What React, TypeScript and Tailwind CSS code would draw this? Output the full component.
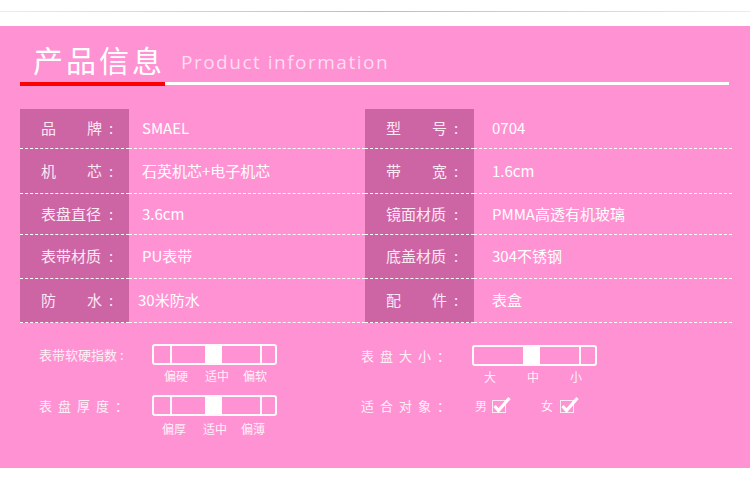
const cjk = "font-['Noto_Sans_CJK_SC','Noto_Sans',sans-serif]";

const rows = [
  { h: "h-[40px]", l1: ["品", "牌"], v1: "SMAEL", l2: ["型", "号"], v2: "0704" },
  { h: "h-[45px]", l1: ["机", "芯"], v1: "石英机芯+电子机芯", l2: ["带", "宽"], v2: "1.6cm" },
  { h: "h-[41px]", l1: ["表盘直径"], v1: "3.6cm", l2: ["镜面材质"], v2: "PMMA高透有机玻璃" },
  { h: "h-[44px]", l1: ["表带材质"], v1: "PU表带", l2: ["底盖材质"], v2: "304不锈钢" },
  { h: "h-[44px]", l1: ["防", "水"], v1: "30米防水", l2: ["配", "件"], v2: "表盒", tight: true },
];

function Label({ parts }: { parts: string[] }) {
  return (
    <div className="flex h-full w-[109px] items-center border-b border-dashed border-white bg-[#cd64a4] pl-[21px] text-[15px] text-[#fde8f4]">
      <div className="flex w-[61px] justify-between">
        {parts.map((p) => (
          <span key={p}>{p}</span>
        ))}
      </div>
      <span className="ml-[7px]">:</span>
    </div>
  );
}

function Slider({ right }: { right?: boolean }) {
  return (
    <div className="flex h-[21px] w-[125px] rounded-[3px] border-2 border-white/95">
      {right ? (
        <>
          <div className="w-[49px]" />
          <div className="w-[17px] bg-white" />
          <div className="w-[41px] border-r-2 border-white/95" />
        </>
      ) : (
        <>
          <div className="w-[18px] border-r-2 border-white/95" />
          <div className="w-[33px]" />
          <div className="w-[17px] bg-white" />
          <div className="w-[40px] border-r-2 border-white/95" />
        </>
      )}
    </div>
  );
}

function Check() {
  return (
    <svg width="21" height="18" viewBox="0 0 21 18" className="mb-[2px]">
      <rect x="1.5" y="4.5" width="13" height="12" fill="none" stroke="#ffe6f4" strokeWidth="1" />
      <path d="M3.5 10 L7.5 14.5 L18.5 2" fill="none" stroke="#ffffff" strokeWidth="3.2" strokeLinejoin="miter" />
    </svg>
  );
}

export default function App() {
  return (
    <div className={`h-[497px] w-[750px] bg-white ${cjk}`}>
      <div className="h-[26px] pt-[11px]">
        <div className="h-px bg-gradient-to-r from-[#ececec] via-[#bcbcbc] to-[#ececec]" />
      </div>
      <div className="h-[442px] bg-[#ff92d3] pt-[13px]">
        <div className="flex h-[40px] items-center">
          <span className="ml-[33px] text-[30px] leading-[40px] tracking-[3px] text-white">产品信息</span>
          <span className="ml-[16px] mt-[6px] font-['Open_Sans',sans-serif] text-[19px] tracking-[1.5px] text-[#ffdcf1]">
            Product information
          </span>
        </div>
        <div className="ml-[20px] mt-[3px] flex items-start">
          <div className="h-[4px] w-[145px] bg-[#ff0000]" />
          <div className="h-[3px] w-[564px] bg-white" />
        </div>

        <div className="ml-[20px] mt-[23px] w-[712px]">
          {rows.map((r) => (
            <div key={r.v1} className={`flex ${r.h}`}>
              <Label parts={r.l1} />
              <div
                className={`flex h-full w-[236px] items-center border-b border-dashed border-white text-[15px] text-white ${
                  r.tight ? "pl-[9px]" : "pl-[13px]"
                }`}
              >
                {r.v1}
              </div>
              <Label parts={r.l2} />
              <div className="flex h-full flex-1 items-center border-b border-dashed border-white pl-[18px] text-[15px] text-white">
                {r.v2}
              </div>
            </div>
          ))}
        </div>

        <div className="mt-[21px] flex text-[#fff0f8]">
          <div className="ml-[39px] w-[322px]">
            <div className="flex items-center">
              <span className="w-[113px] text-[13px] leading-[21px]">表带软硬指数 :</span>
              <Slider />
            </div>
            <div className="ml-[125px] mt-[3px] flex gap-[17px] text-[12px] leading-[16px]">
              <span>偏硬</span>
              <span>适中</span>
              <span className="-ml-[3px]">偏软</span>
            </div>
            <div className="mt-[11px] flex items-center">
              <span className="w-[113px] text-[13px] leading-[21px] tracking-[6px]">表盘厚度：</span>
              <Slider />
            </div>
            <div className="ml-[123px] mt-[5px] flex gap-[17px] text-[12px] leading-[16px]">
              <span>偏厚</span>
              <span>适中</span>
              <span className="-ml-[3px]">偏薄</span>
            </div>
          </div>

          <div className="w-[300px]">
            <div className="mt-px flex items-center">
              <span className="w-[111px] text-[13px] leading-[21px] tracking-[6px]">表盘大小：</span>
              <Slider right />
            </div>
            <div className="ml-[123px] mt-[3px] flex gap-[31px] text-[12px] leading-[16px]">
              <span>大</span>
              <span>中</span>
              <span>小</span>
            </div>
            <div className="mt-[10px] flex h-[21px] items-end">
              <span className="w-[114px] text-[13px] leading-[21px] tracking-[6px]">适合对象：</span>
              <span className="text-[12px] leading-[21px]">男</span>
              <span className="ml-[4px]"><Check /></span>
              <span className="ml-[29px] text-[12px] leading-[21px]">女</span>
              <span className="ml-[6px]"><Check /></span>
            </div>
          </div>
        </div>
      </div>
    </div>
  );
}
